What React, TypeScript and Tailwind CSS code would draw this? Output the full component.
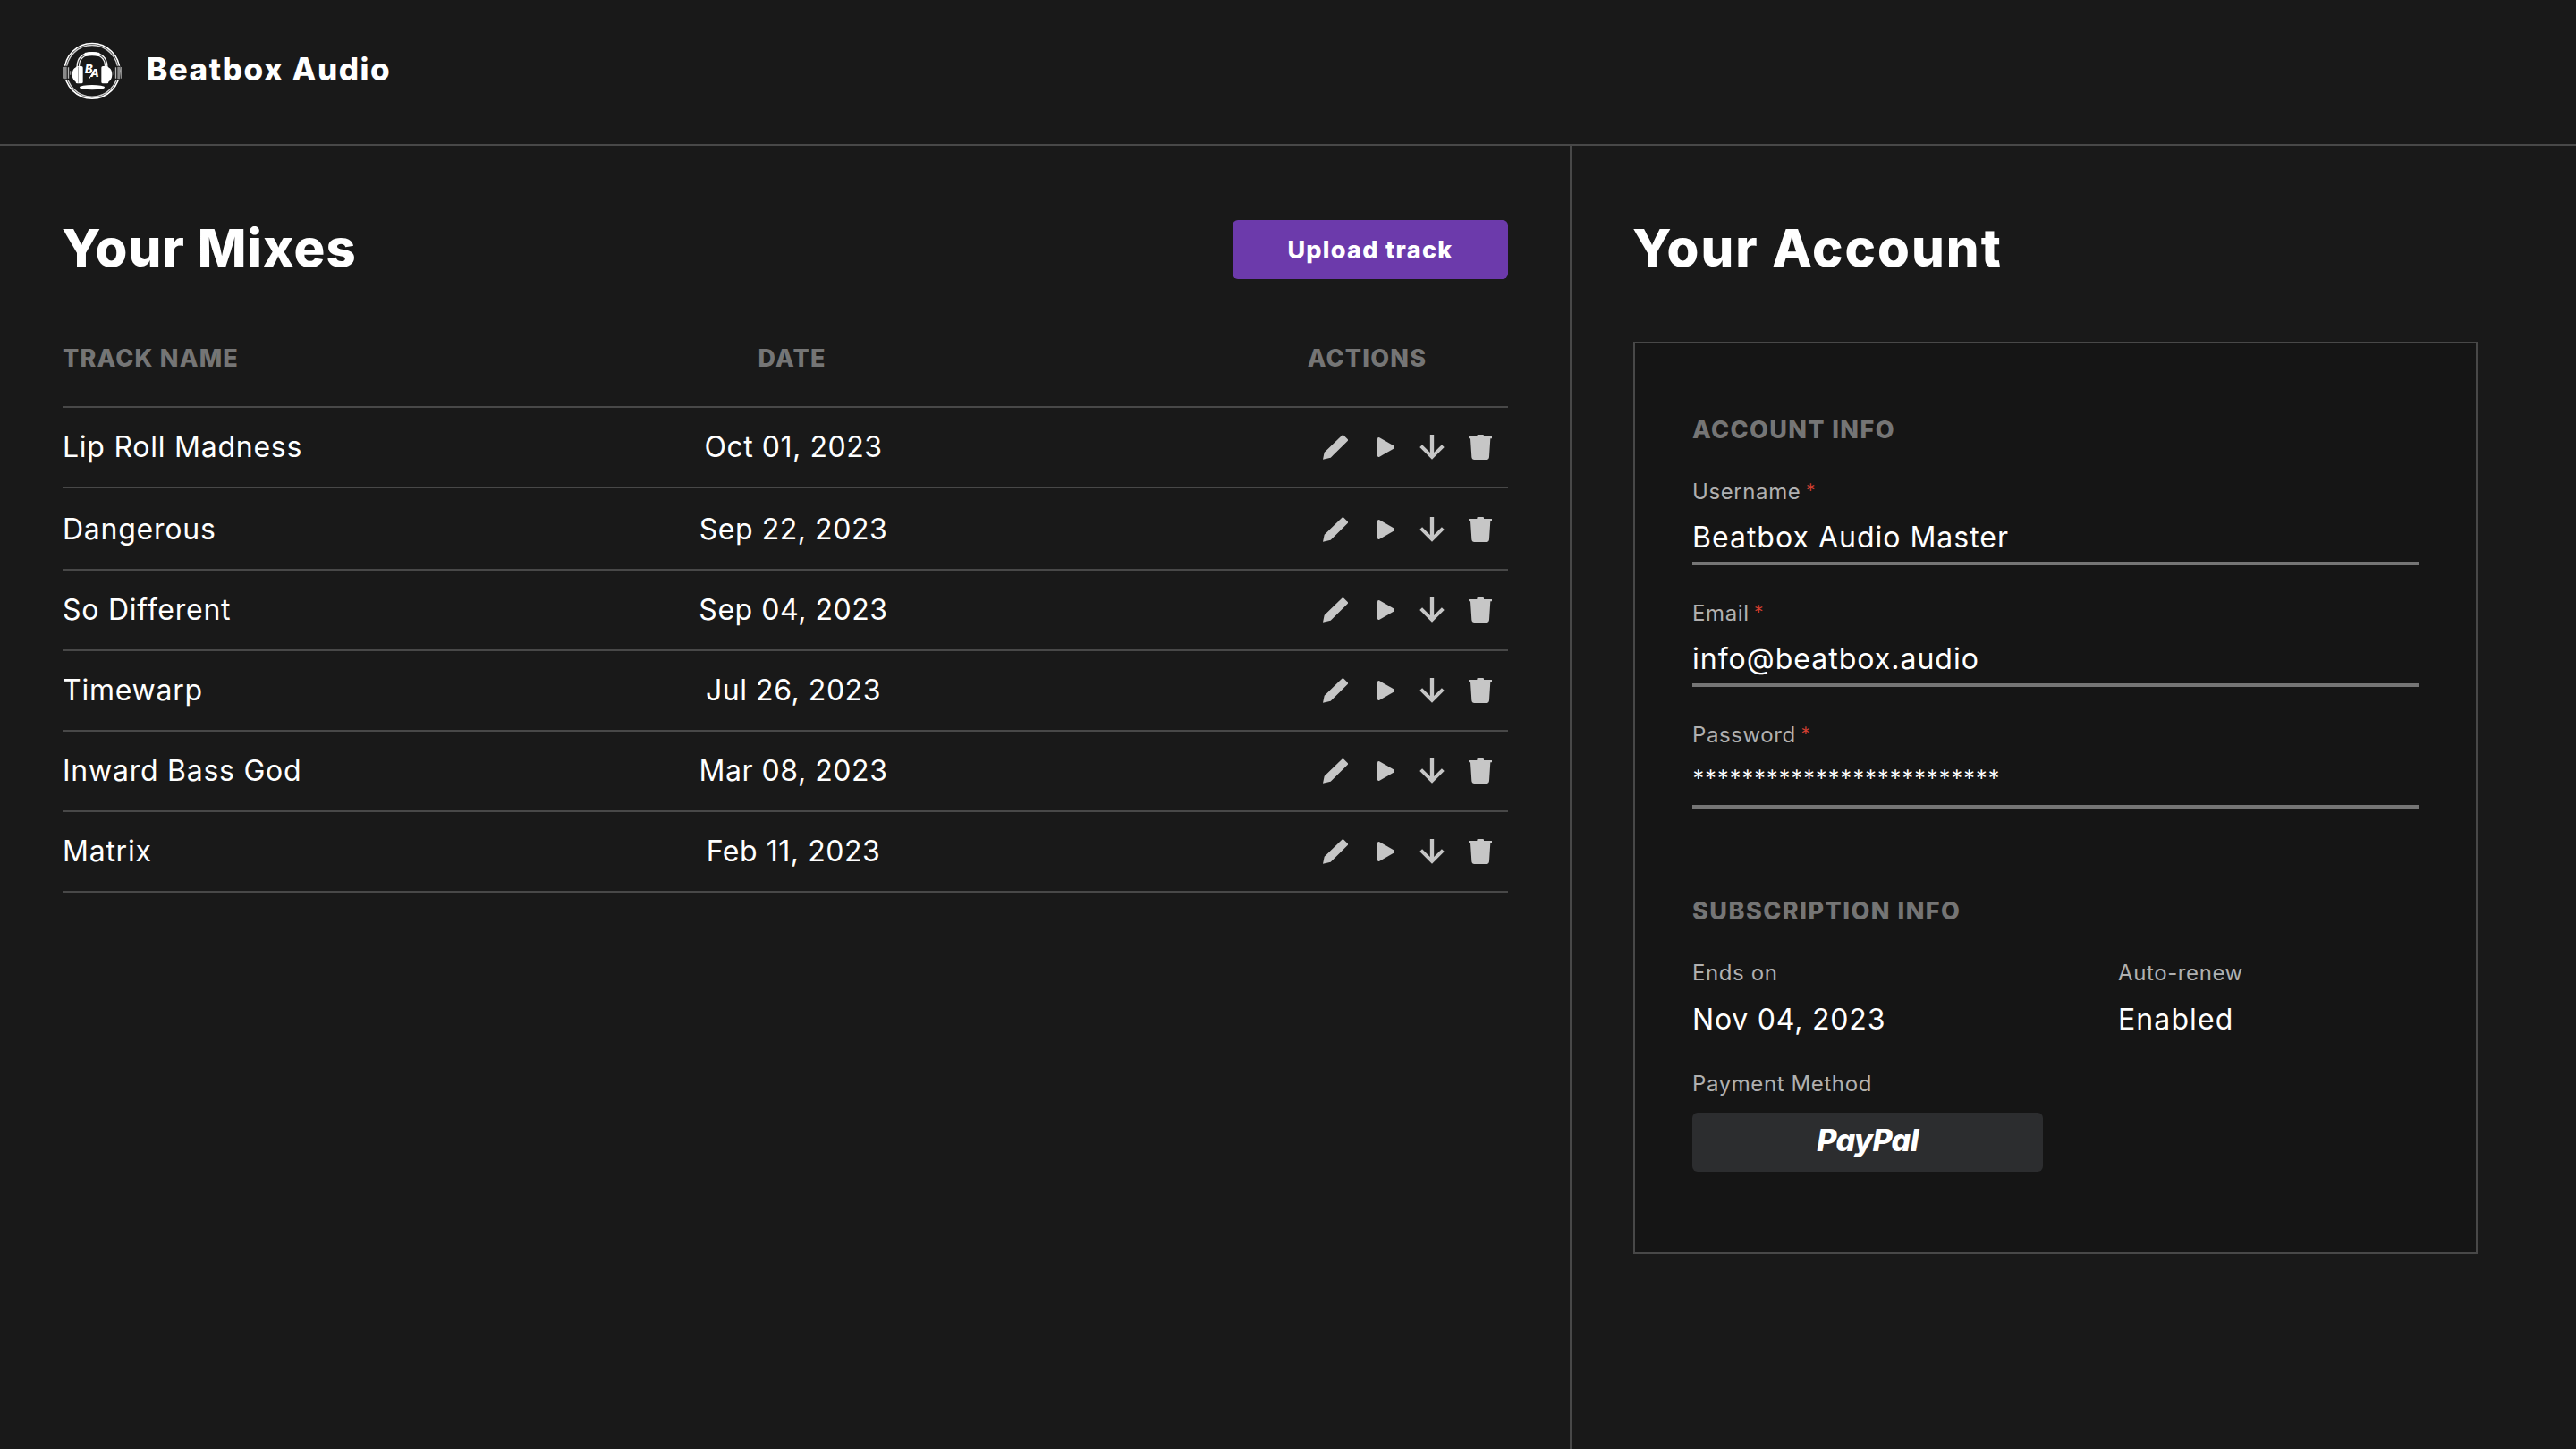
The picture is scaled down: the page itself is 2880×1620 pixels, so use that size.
const tracks = [
  { name: "Lip Roll Madness", date: "Oct 01, 2023" },
  { name: "Dangerous", date: "Sep 22, 2023" },
  { name: "So Different", date: "Sep 04, 2023" },
  { name: "Timewarp", date: "Jul 26, 2023" },
  { name: "Inward Bass God", date: "Mar 08, 2023" },
  { name: "Matrix", date: "Feb 11, 2023" },
];

const heading = "text-[27px] leading-8 font-extrabold text-[#757575]";
const value = "text-[32px] leading-8 font-[380]";
const label = "h-7 text-[24px] leading-7 font-[380] tracking-[0.6px] text-[#b0b0b0]";

function Logo() {
  return (
    <svg className="h-[65px] w-[66px]" viewBox="60 50 198 195" fill="none">
      {/* ring */}
      <circle cx="159" cy="147" r="92.5" stroke="#ffffff" strokeWidth="5" />
      <circle cx="159" cy="147" r="86.5" stroke="#d0d0d0" strokeWidth="4" />
      {/* side levels */}
      <path d="M62 134v38M256 134v38" stroke="#8a8a8a" strokeWidth="4" />
      <path d="M66 130h18v46H66zM234 130h18v46h-18z" fill="#191919" />
      <path d="M70 133v41M248 133v41" stroke="#8a8a8a" strokeWidth="8" />
      <path d="M79.500 135v37M238.500 135v37" stroke="#b5b5b5" strokeWidth="4" />
      <path d="M86 147v13M232 147v13" stroke="#8a8a8a" strokeWidth="4" />
      {/* headphones */}
      <path d="M112 132C112 104 130 89 159 89s47 15 47 43" stroke="#f0f0f0" strokeWidth="11" />
      <path d="M112 132C112 104 130 89 159 89s47 15 47 43" stroke="#191919" strokeWidth="3" />
      <path d="M134 86q25-6 50 0v12q-25-5-50 0z" fill="#fff" />
      <path d="M110 134v50c-12 0-18-12-18-25s6-25 18-25zM208 134v50c12 0 18-12 18-25s-6-25-18-25z" fill="#fff" />
      <rect x="104" y="131" width="24" height="58" rx="5" fill="#fff" />
      <rect x="190" y="131" width="24" height="58" rx="5" fill="#fff" />
      <path d="M112.500 133v54M205.500 133v54" stroke="#9a9a9a" strokeWidth="2.500" />
      <ellipse cx="159" cy="202" rx="42" ry="8" fill="#fff" />
      {/* monogram */}
      <path d="M149 173l20-32" stroke="#fff" strokeWidth="3" />
      <text x="135" y="155" fill="#fff" fontSize="39" fontWeight="800" fontStyle="italic" fontFamily="Inter, sans-serif">B</text>
      <text x="154" y="168" fill="#fff" fontSize="37" fontWeight="800" fontStyle="italic" fontFamily="Inter, sans-serif">A</text>
    </svg>
  );
}

function Actions() {
  return (
    <div className="mt-px flex w-[316px] items-center justify-end pr-[18px] text-[#c6c6c6]">
      <svg className="mr-[33px] size-7" viewBox="0 0 84 84" fill="currentColor">
        <path d="M0 83 5 59 64 2q3-3 6 0l13 13q3 3 0 6L26 77z" />
      </svg>
      <svg className="mr-[28px] h-[22px] w-[19px]" viewBox="0 0 57 66" fill="currentColor">
        <path d="M0 5q0-7 7-4l47 27q6 5 0 10L7 65q-7 3-7-4z" />
      </svg>
      <svg className="mr-[27px] size-7" viewBox="0 0 84 84" fill="none" stroke="currentColor">
        <path d="M42 0v74" strokeWidth="13" />
        <path d="m5 38 37 36.500L79 38" strokeWidth="12" />
      </svg>
      <svg className="h-7 w-[26px]" viewBox="0 0 78 84" fill="currentColor">
        <path d="M28 6V3q0-3 3-3h17q3 0 3 3v3h27v7h-5l-4 62q-1 9-9 9H19q-8 0-9-9L6 13H0V6z" />
      </svg>
    </div>
  );
}

function Field({ title, children }: { title: string; children: React.ReactNode }) {
  return (
    <div className="mb-10 border-b-4 border-[#757575] pb-[11px]">
      <div className={`${label} flex`}>
        {title}
        <span className="ml-[5px] pt-px font-[Lato] text-[27px] text-[#d23f31]">*</span>
      </div>
      <div className={`${value} mt-[21px] h-8 tracking-[1px]`}>{children}</div>
    </div>
  );
}

export default function App() {
  return (
    <div className="flex h-[1620px] w-[2880px] flex-col overflow-hidden bg-[#191919] font-[Inter,sans-serif] whitespace-nowrap text-white">
      <header className="flex h-[163px] shrink-0 items-center gap-7 border-b-2 border-[#484848] px-[70px] pb-[3px]">
        <Logo />
        <span className="pb-[3px] text-[35px] font-extrabold tracking-[1.5px]">Beatbox Audio</span>
      </header>

      <div className="flex flex-1">
        <main className="w-[1757px] border-r-2 border-[#484848] pt-[83px] pr-[69px] pl-[70px]">
          <div className="flex h-[66px] items-center justify-between">
            <h1 className="-ml-px pb-1 text-[58px] font-[850] tracking-[1.1px]">Your Mixes</h1>
            <button className="h-[66px] w-[308px] rounded-md bg-[#6c3aab] pt-[3px] text-[27px] font-extrabold tracking-[1.3px]">
              Upload track
            </button>
          </div>

          <div className={`${heading} mt-[34px] flex h-[110px] items-center border-b-2 border-[#484848] pt-[2px] tracking-[1.2px]`}>
            <div className="w-[334px]">TRACK NAME</div>
            <div className="w-[963px] text-center">DATE</div>
            <div className="w-[319px] pl-1 text-center">ACTIONS</div>
          </div>

          {tracks.map((track, index) => (
            <div
              key={track.name}
              className={`${value} flex items-center border-b-2 border-[#484848] pb-px ${index === 1 ? "h-[92px] pt-[2px]" : "h-[90px]"}`}
            >
              <div className="w-[334px] tracking-[0.75px]">{track.name}</div>
              <div className="w-[966px] text-center tracking-[0.55px]">{track.date}</div>
              <Actions />
            </div>
          ))}
        </main>

        <aside className="flex-1 pt-[83px] pr-[110px] pl-[69px]">
          <div className="flex h-[66px] items-center">
            <h1 className="-ml-px pb-1 text-[58px] font-[850] tracking-[2px]">Your Account</h1>
          </div>

          <div className="mt-[70px] h-[1020px] w-[944px] border-2 border-[#484848] bg-[#151515] pt-[81px] pr-[63px] pl-16">
            <h2 className={`${heading} mb-[39px] tracking-[1.4px]`}>ACCOUNT INFO</h2>
            <Field title="Username">Beatbox Audio Master</Field>
            <Field title="Email">info@beatbox.audio</Field>
            <Field title="Password">
              <span className="font-[Lato] font-medium tracking-[0.16px]">*************************</span>
            </Field>

            <h2 className={`${heading} mt-[99px] tracking-[1.5px]`}>SUBSCRIPTION INFO</h2>
            <div className="mt-[39px] flex">
              <div className="w-[476px]">
                <div className={label}>Ends on</div>
                <div className={`${value} mt-[22px] tracking-[0.8px]`}>Nov 04, 2023</div>
              </div>
              <div>
                <div className={label}>Auto-renew</div>
                <div className={`${value} mt-[22px] tracking-[1.1px]`}>Enabled</div>
              </div>
            </div>
            <div className={`${label} mt-[42px]`}>Payment Method</div>
            <div className="mt-[18px] flex h-[66px] w-[392px] items-center justify-center rounded-md bg-[#2c2d2f] pb-1.5 text-[34px] font-extrabold tracking-[-0.6px] italic">
              PayPal
            </div>
          </div>
        </aside>
      </div>
    </div>
  );
}
